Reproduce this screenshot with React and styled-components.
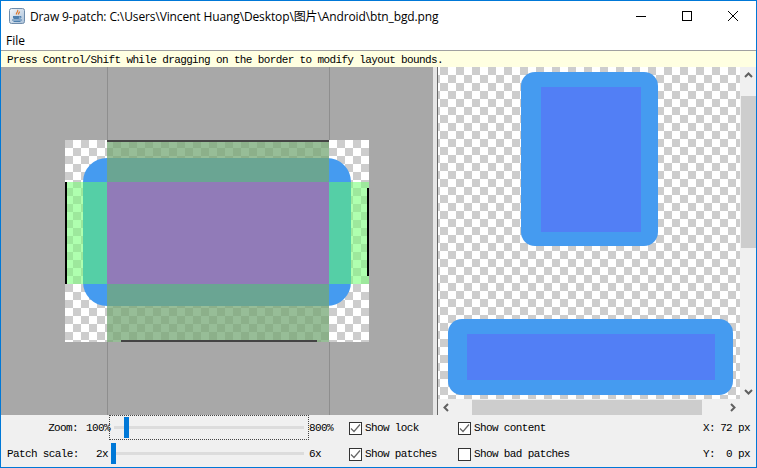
import React from 'react';
import styled, { createGlobalStyle } from 'styled-components';

const GlobalStyle = createGlobalStyle`
  html, body {
    margin: 0;
    padding: 0;
    background: #fff;
  }
`;

const Frame = styled.div`
  width: 757px;
  height: 468px;
  box-sizing: border-box;
  border: 1px solid #0078d7;
  display: flex;
  flex-direction: column;
  background: #f0f0f0;
  overflow: hidden;
`;

const TitleBar = styled.div`
  height: 30px;
  flex: none;
  display: flex;
  align-items: center;
  background: #fff;
  padding-left: 8px;
`;

const WindowTitle = styled.div`
  flex: 1;
  margin-left: 5px;
  font: 12px "Open Sans", "Noto Sans CJK SC", sans-serif;
  letter-spacing: -0.12px;
  color: #000;
  white-space: nowrap;
`;

const WindowButton = styled.div`
  width: 46px;
  height: 30px;
  display: flex;
  align-items: center;
  justify-content: center;
`;

const MenuBar = styled.div`
  height: 19px;
  flex: none;
  background: #fff;
  border-bottom: 1px solid #a0a0a0;
  display: flex;
  align-items: center;
  padding-left: 5px;
  font: 12px "Open Sans", sans-serif;
  color: #000;
`;

const StatusBar = styled.div`
  height: 16px;
  flex: none;
  box-sizing: border-box;
  background: #ffffe1;
  display: flex;
  align-items: center;
  padding: 2px 0 0 6px;
`;

const BitmapText = styled.span`
  font: 11px "Liberation Mono", monospace;
  letter-spacing: -0.63px;
  color: #000;
  white-space: pre;
`;

const Workspace = styled.div`
  height: 348px;
  flex: none;
  display: flex;
`;

const PatchPane = styled.div`
  position: relative;
  width: 432px;
  flex: none;
  background: #a8a8a8;
  display: flex;
  align-items: center;
  justify-content: center;
`;

const Guide = styled.div`
  position: absolute;
  top: 0;
  bottom: 0;
  left: ${(p) => p.$left}px;
  width: 1px;
  background: #8e8e8e;
`;

const Divider = styled.div`
  width: 5px;
  flex: none;
  box-sizing: border-box;
  background: #e6e6e6;
  border-right: 1px solid #696969;
`;

const PreviewPane = styled.div`
  flex: 1;
  min-width: 0;
  display: grid;
  grid-template-columns: 1fr 16px;
  grid-template-rows: 1fr 16px;
`;

const Viewport = styled.div`
  overflow: hidden;
  display: flex;
  flex-direction: column;
  align-items: center;
  padding-top: 5px;
  background: repeating-conic-gradient(#fff 0 25%, #cdcdcd 0 50%) 2px 0 / 16px 16px;
`;

const Outer = styled.div`
  flex: none;
  box-sizing: border-box;
  width: ${(p) => p.$w}px;
  height: ${(p) => p.$h}px;
  margin-top: ${(p) => p.$top}px;
  margin-left: ${(p) => p.$shift}px;
  padding-left: ${(p) => p.$inset}px;
  border-radius: 14px;
  background: #459bf0;
  display: flex;
  align-items: center;
  justify-content: center;
`;

const Inner = styled.div`
  flex: none;
  width: ${(p) => p.$w}px;
  height: ${(p) => p.$h}px;
  background: #527ff5;
`;

const VScroll = styled.div`
  display: flex;
  flex-direction: column;
  align-items: center;
  justify-content: space-between;
  background: #f0f0f0;
`;

const HScroll = styled.div`
  display: flex;
  align-items: center;
  justify-content: space-between;
  background: #f0f0f0;
`;

const ScrollArrow = styled.div`
  flex: none;
  display: flex;
  align-items: center;
  justify-content: center;
  width: ${(p) => (p.$horizontal ? 16 : 15)}px;
  height: ${(p) => (p.$horizontal ? 15 : 16)}px;
`;

const VThumb = styled.div`
  width: 15px;
  height: 152px;
  margin-top: 13px;
  margin-bottom: auto;
  background: #cdcdcd;
`;

const HThumb = styled.div`
  width: 230px;
  height: 15px;
  margin-left: 18px;
  margin-right: auto;
  background: #cdcdcd;
`;

const Corner = styled.div`
  background: #f0f0f0;
`;

const Controls = styled.div`
  flex: 1;
  display: grid;
  grid-template-columns: 77px 31px 200px 40px 109px 245px 1fr;
  grid-template-rows: 26px 26px;
  align-items: center;
`;

const RightLabel = styled(BitmapText)`
  justify-self: end;
  margin-right: ${(p) => p.$nudge}px;
`;

const FieldLabel = styled(BitmapText)`
  padding-left: 6px;
  justify-self: ${(p) => (p.$end ? 'end' : 'start')};
`;

const SliderBox = styled.div`
  position: relative;
  box-sizing: border-box;
  height: 25px;
  align-self: start;
  border: 1px dotted ${(p) => (p.$focused ? '#444' : 'transparent')};
  display: flex;
  align-items: center;
  padding: 0 4px;
`;

const SliderTrack = styled.div`
  flex: 1;
  height: 3px;
  background: #dcdcdc;
`;

const SliderThumb = styled.div`
  position: absolute;
  top: 1px;
  left: ${(p) => p.$left}px;
  width: 5px;
  height: 21px;
  background: #0078d7;
`;

const CheckField = styled.div`
  display: flex;
  align-items: center;
  gap: 3px;
`;

const CheckBox = styled.div`
  box-sizing: border-box;
  width: 13px;
  height: 13px;
  border: 1px solid #333;
  background: #fff;
  display: flex;
  align-items: center;
  justify-content: center;
`;

const Coord = styled.div`
  display: flex;
  justify-content: space-between;
  padding-right: 6px;
`;

function JavaIcon() {
  return (
    <svg width="16" height="16" viewBox="0 0 16 16">
      <defs>
        <linearGradient id="javaBg" x1="0" y1="0" x2="1" y2="1">
          <stop offset="0" stopColor="#f4f7fb" />
          <stop offset="1" stopColor="#a9c0d8" />
        </linearGradient>
      </defs>
      <rect x="0.5" y="0.5" width="15" height="15" rx="2" fill="url(#javaBg)" stroke="#6f8cab" />
      <path d="M8.5 2c1.5 1.5-2 2.5-1 4.5M10.5 3.5c0 1.5-1.5 2-1 3" fill="none" stroke="#e0782a" strokeWidth="1.2" />
      <path d="M4 8h6.5v1.5c0 1-1 1.5-2 1.5h-2.5c-1 0-2-.5-2-1.5z" fill="#4d7fae" />
      <path d="M10.5 8.5h1.5v1.2l-1.5.6M3 12h10M4.5 13.5h7" fill="none" stroke="#4d7fae" />
    </svg>
  );
}

function MinimizeIcon() {
  return (
    <svg width="10" height="10" viewBox="0 0 10 10">
      <path d="M0 5.5h10" stroke="#000" fill="none" />
    </svg>
  );
}

function MaximizeIcon() {
  return (
    <svg width="10" height="10" viewBox="0 0 10 10">
      <rect x="0.5" y="0.5" width="9" height="9" stroke="#000" fill="none" />
    </svg>
  );
}

function CloseIcon() {
  return (
    <svg width="10" height="10" viewBox="0 0 10 10">
      <path d="M0 0l10 10M10 0L0 10" stroke="#000" fill="none" />
    </svg>
  );
}

function Chevron({ dir }) {
  const d = {
    up: 'M1 6l3.5-3.5L8 6',
    down: 'M1 3l3.5 3.5L8 3',
    left: 'M6 1L2.5 4.5 6 8',
    right: 'M3 1l3.5 3.5L3 8',
  }[dir];
  return (
    <svg width="9" height="9" viewBox="0 0 9 9">
      <path d={d} fill="none" stroke="#606060" strokeWidth="2" />
    </svg>
  );
}

function CheckMark() {
  return (
    <svg width="11" height="11" viewBox="0 0 11 11">
      <path d="M1 5.5l3 3L10 1.5" fill="none" stroke="#666" strokeWidth="1.2" />
    </svg>
  );
}

function Check({ checked, label }) {
  return (
    <CheckField>
      <CheckBox>{checked && <CheckMark />}</CheckBox>
      <BitmapText>{label}</BitmapText>
    </CheckField>
  );
}

// one checker pattern, two tints
function CheckerPattern({ id, light, dark }) {
  return (
    <pattern id={id} width="16" height="16" patternUnits="userSpaceOnUse">
      <rect width="16" height="16" fill={light} />
      <rect width="8" height="8" fill={dark} />
      <rect x="8" y="8" width="8" height="8" fill={dark} />
    </pattern>
  );
}

function PatchImage() {
  return (
    <svg width="304" height="202" viewBox="0 0 304 202" style={{ display: 'block', position: 'relative' }}>
      <defs>
        <CheckerPattern id="bare" light="#ffffff" dark="#cdcdcd" />
        <CheckerPattern id="band" light="#97bd97" dark="#8cb08a" />
        <CheckerPattern id="side" light="#afffaf" dark="#9de89c" />
      </defs>
      <rect width="304" height="202" fill="url(#bare)" />
      <rect x="18" y="18" width="268" height="148" rx="24" fill="#459bf0" />
      <rect x="42" width="222" height="18" fill="url(#band)" />
      <rect x="42" y="166" width="222" height="36" fill="url(#band)" />
      <rect y="42" width="18" height="102" fill="url(#side)" />
      <rect x="286" y="42" width="18" height="102" fill="url(#side)" />
      <rect x="42" y="18" width="222" height="148" fill="#6aa593" />
      <rect x="18" y="42" width="268" height="102" fill="#55cfa6" />
      <rect x="42" y="42" width="222" height="102" fill="#917bb8" />
      <rect x="42" width="222" height="2" fill="#444" />
      <rect y="42" width="2" height="102" fill="#000" />
      <rect x="302" y="48" width="2" height="88" fill="#000" />
      <rect x="56" y="200" width="196" height="2" fill="#444" />
    </svg>
  );
}

export default function App() {
  return (
    <>
      <GlobalStyle />
      <Frame>
        <TitleBar>
          <JavaIcon />
          <WindowTitle>Draw 9-patch: C:\Users\Vincent Huang\Desktop\图片\Android\btn_bgd.png</WindowTitle>
          <WindowButton><MinimizeIcon /></WindowButton>
          <WindowButton><MaximizeIcon /></WindowButton>
          <WindowButton><CloseIcon /></WindowButton>
        </TitleBar>
        <MenuBar>File</MenuBar>
        <StatusBar>
          <BitmapText>Press Control/Shift while dragging on the border to modify layout bounds.</BitmapText>
        </StatusBar>
        <Workspace>
          <PatchPane>
            <Guide $left={106} />
            <Guide $left={328} />
            <PatchImage />
          </PatchPane>
          <Divider />
          <PreviewPane>
            <Viewport>
              <Outer $w={137} $h={174} $top={0} $shift={0} $inset={3}>
                <Inner $w={100} $h={145} />
              </Outer>
              <Outer $w={285} $h={76} $top={73} $shift={3} $inset={1}>
                <Inner $w={248} $h={46} />
              </Outer>
            </Viewport>
            <VScroll>
              <ScrollArrow><Chevron dir="up" /></ScrollArrow>
              <VThumb />
              <ScrollArrow><Chevron dir="down" /></ScrollArrow>
            </VScroll>
            <HScroll>
              <ScrollArrow $horizontal><Chevron dir="left" /></ScrollArrow>
              <HThumb />
              <ScrollArrow $horizontal><Chevron dir="right" /></ScrollArrow>
            </HScroll>
            <Corner />
          </PreviewPane>
        </Workspace>
        <Controls>
          <FieldLabel $end>Zoom:</FieldLabel>
          <RightLabel $nudge={-1}>100%</RightLabel>
          <SliderBox $focused>
            <SliderTrack />
            <SliderThumb $left={14} />
          </SliderBox>
          <BitmapText>800%</BitmapText>
          <Check checked label="Show lock" />
          <Check checked label="Show content" />
          <Coord><BitmapText>X:</BitmapText><BitmapText>72 px</BitmapText></Coord>

          <FieldLabel>Patch scale:</FieldLabel>
          <RightLabel $nudge={1}>2x</RightLabel>
          <SliderBox>
            <SliderTrack />
            <SliderThumb $left={1} />
          </SliderBox>
          <BitmapText>6x</BitmapText>
          <Check checked label="Show patches" />
          <Check label="Show bad patches" />
          <Coord><BitmapText>Y:</BitmapText><BitmapText> 0 px</BitmapText></Coord>
        </Controls>
      </Frame>
    </>
  );
}
